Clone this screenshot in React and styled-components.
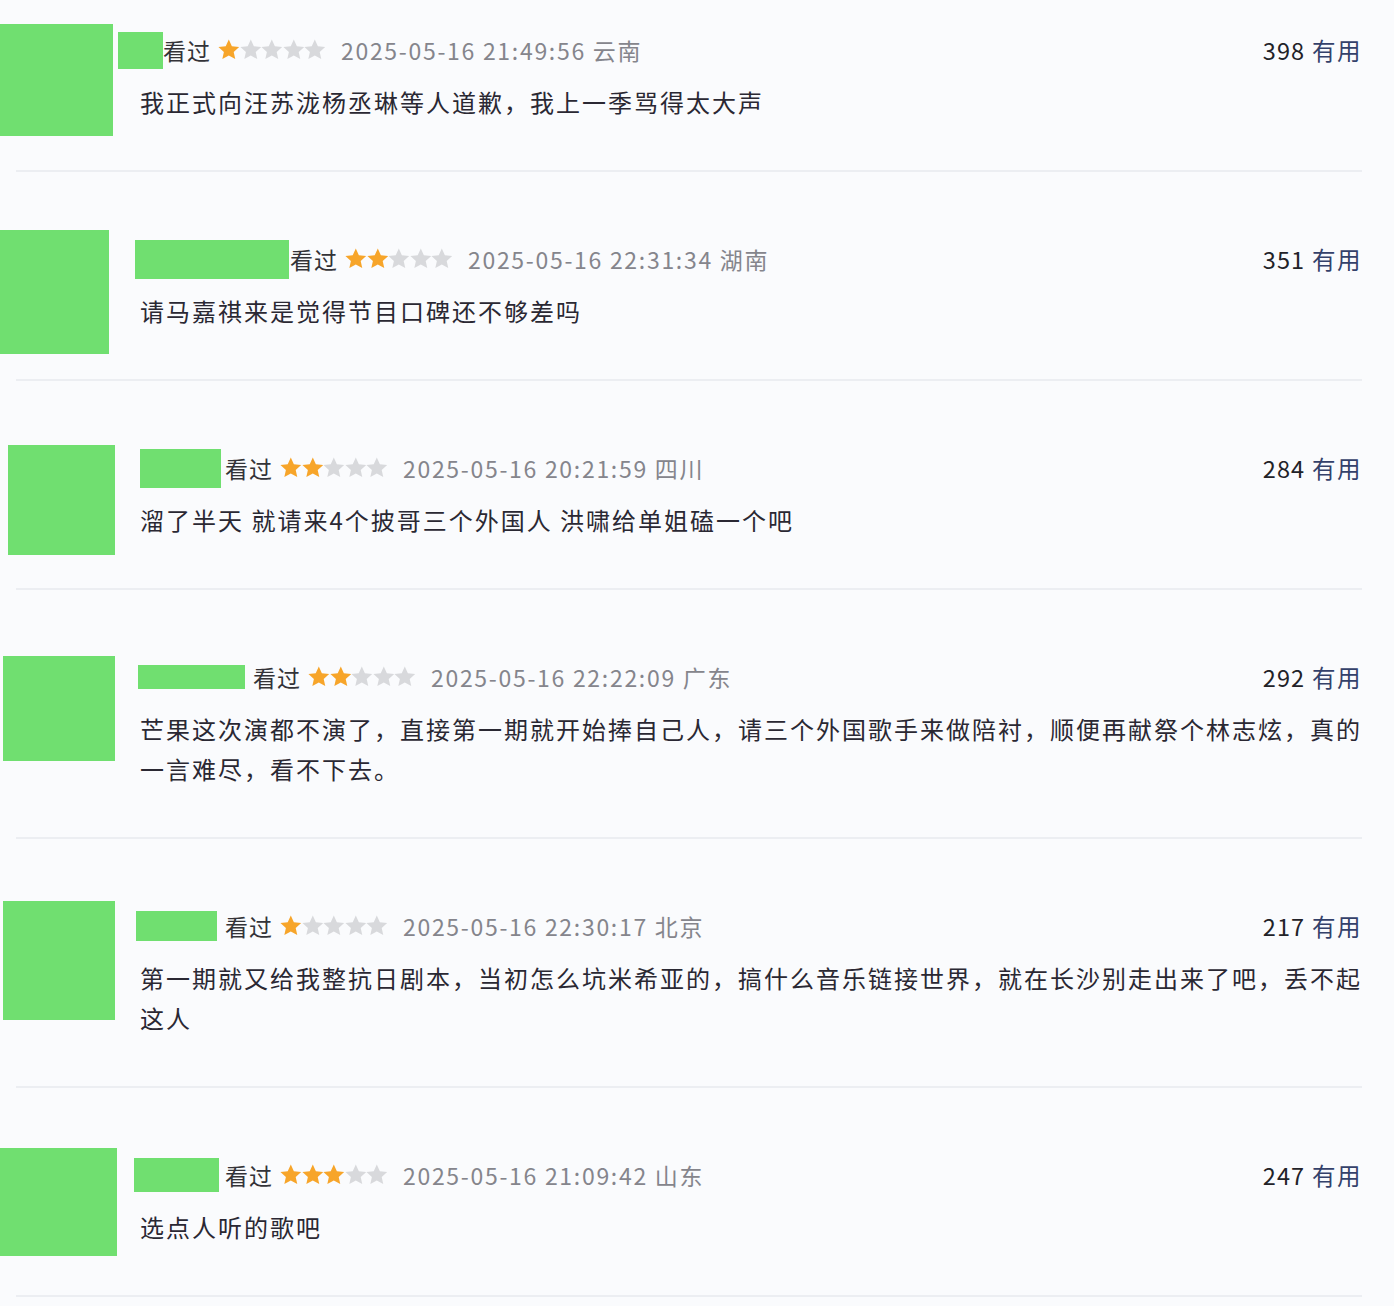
import React from "react";
import styled, { createGlobalStyle } from "styled-components";

const Global = createGlobalStyle`
  html, body {
    margin: 0;
    padding: 0;
    background: #fafbfd;
  }
  body {
    font-family: "Noto Sans CJK SC", "Noto Sans", sans-serif;
    color: #2a2833;
  }
`;

const GREEN = "#70df70";

const reviews = [
  {
    avatar: { w: 113, h: 112, ml: 0, mt: 5 },
    name: { w: 45, h: 37, ml: -22, gap: 0 },
    rating: 1,
    time: "2025-05-16 21:49:56",
    region: "云南",
    votes: 398,
    lines: ["我正式向汪苏泷杨丞琳等人道歉，我上一季骂得太大声"],
  },
  {
    avatar: { w: 109, h: 124, ml: 0, mt: 2 },
    name: { w: 154, h: 39, ml: -5, gap: 1 },
    rating: 2,
    time: "2025-05-16 22:31:34",
    region: "湖南",
    votes: 351,
    lines: ["请马嘉祺来是觉得节目口碑还不够差吗"],
  },
  {
    avatar: { w: 107, h: 110, ml: 8, mt: 8 },
    name: { w: 81, h: 39, ml: 0, gap: 4 },
    rating: 2,
    time: "2025-05-16 20:21:59",
    region: "四川",
    votes: 284,
    lines: ["溜了半天 就请来4个披哥三个外国人 洪啸给单姐磕一个吧"],
  },
  {
    avatar: { w: 112, h: 105, ml: 3, mt: 10 },
    name: { w: 107, h: 24, ml: -2, gap: 8 },
    rating: 2,
    time: "2025-05-16 22:22:09",
    region: "广东",
    votes: 292,
    lines: [
      "芒果这次演都不演了，直接第一期就开始捧自己人，请三个外国歌手来做陪衬，顺便再献祭个林志炫，真的",
      "一言难尽，看不下去。",
    ],
  },
  {
    avatar: { w: 112, h: 119, ml: 3, mt: 6 },
    name: { w: 81, h: 30, ml: -4, gap: 8 },
    rating: 1,
    time: "2025-05-16 22:30:17",
    region: "北京",
    votes: 217,
    lines: [
      "第一期就又给我整抗日剧本，当初怎么坑米希亚的，搞什么音乐链接世界，就在长沙别走出来了吧，丢不起",
      "这人",
    ],
  },
  {
    avatar: { w: 117, h: 108, ml: 0, mt: 4 },
    name: { w: 85, h: 34, ml: -6, gap: 6 },
    rating: 3,
    time: "2025-05-16 21:09:42",
    region: "山东",
    votes: 247,
    lines: ["选点人听的歌吧"],
  },
];

const Page = styled.div`
  width: 1394px;
  height: 1306px;
  overflow: hidden;
  box-sizing: border-box;
  padding-right: 32px;
`;

const Item = styled.section`
  padding-top: 56px;
  &:first-child {
    padding-top: 19px;
  }
`;

const Body = styled.div`
  display: flex;
  align-items: flex-start;
`;

const AvatarSlot = styled.div`
  width: 140px;
  flex-shrink: 0;
`;

const Avatar = styled.div`
  width: ${(p) => p.$w}px;
  height: ${(p) => p.$h}px;
  margin-left: ${(p) => p.$ml}px;
  margin-top: ${(p) => p.$mt}px;
  background: ${GREEN};
`;

const Main = styled.div`
  flex: 1;
  min-width: 0;
  padding-top: 11px;
  padding-bottom: 48px;
`;

const Header = styled.div`
  height: 40px;
  display: flex;
  align-items: center;
  justify-content: space-between;
`;

const Meta = styled.div`
  display: flex;
  align-items: center;
  font-size: 23px;
`;

const NameBar = styled.div`
  width: ${(p) => p.$w}px;
  height: ${(p) => p.$h}px;
  margin-left: ${(p) => p.$ml}px;
  margin-right: ${(p) => p.$gap}px;
  background: ${GREEN};
  flex-shrink: 0;
`;

const Watched = styled.span`
  color: #333338;
  letter-spacing: 1px;
`;

const Stars = styled.span`
  display: inline-flex;
  margin-left: 7px;
`;

const Time = styled.span`
  margin-left: 15px;
  color: #85858c;
  letter-spacing: 1.7px;
`;

const Votes = styled.div`
  font-size: 23.5px;
  color: #222228;
  letter-spacing: 1px;
  white-space: nowrap;
`;

const Useful = styled.span`
  color: #34416a;
  margin-left: 7px;
  letter-spacing: 1.5px;
`;

const Comment = styled.div`
  margin-top: 12px;
  font-size: 24px;
  line-height: 40px;
  letter-spacing: 2px;
  color: #2a2833;
`;

const Line = styled.div`
  white-space: nowrap;
  text-align: ${(p) => (p.$justify ? "justify" : "left")};
  text-align-last: ${(p) => (p.$justify ? "justify" : "auto")};
  ${(p) => (p.$justify ? "white-space: normal;" : "")}
`;

const Divider = styled.div`
  height: 2px;
  margin-left: 16px;
  background: #eceef2;
`;

const Star = ({ on }) => (
  <svg width="21.6" height="22" viewBox="2 2.4 20 19">
    <path
      d="M12 2.2l2.85 6.2 6.75.72-5.05 4.57 1.42 6.65L12 16.95l-5.97 3.39 1.42-6.65L2.4 9.12l6.75-.72z"
      fill={on ? "#f7a52a" : "#d8d9dc"}
    />
  </svg>
);

function Review({ r }) {
  return (
    <Item>
      <Body>
        <AvatarSlot>
          <Avatar $w={r.avatar.w} $h={r.avatar.h} $ml={r.avatar.ml} $mt={r.avatar.mt} />
        </AvatarSlot>
        <Main>
          <Header>
            <Meta>
              <NameBar $w={r.name.w} $h={r.name.h} $ml={r.name.ml} $gap={r.name.gap} />
              <Watched>看过</Watched>
              <Stars>
                {[1, 2, 3, 4, 5].map((i) => (
                  <Star key={i} on={i <= r.rating} />
                ))}
              </Stars>
              <Time>
                {r.time} {r.region}
              </Time>
            </Meta>
            <Votes>
              {r.votes}
              <Useful>有用</Useful>
            </Votes>
          </Header>
          <Comment>
            {r.lines.map((l, i) => (
              <Line key={i} $justify={i < r.lines.length - 1}>
                {l}
              </Line>
            ))}
          </Comment>
        </Main>
      </Body>
      <Divider />
    </Item>
  );
}

export default function App() {
  return (
    <>
      <Global />
      <Page>
        {reviews.map((r, i) => (
          <Review key={i} r={r} />
        ))}
      </Page>
    </>
  );
}
